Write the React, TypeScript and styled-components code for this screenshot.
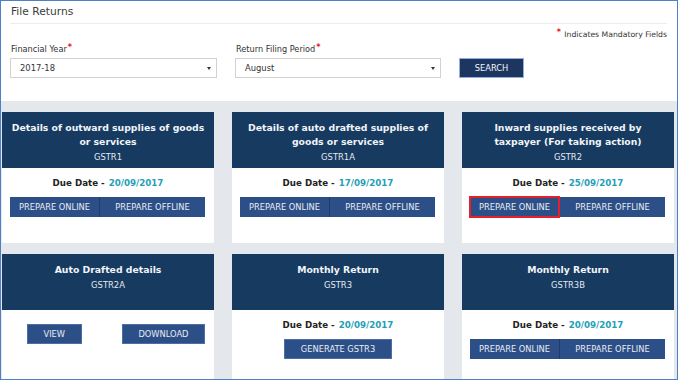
import React from "react";
import styled, { createGlobalStyle } from "styled-components";

const GlobalStyle = createGlobalStyle`
  html, body {
    margin: 0;
    padding: 0;
    background: #ffffff;
  }
  body {
    font-family: "DejaVu Sans", Verdana, sans-serif;
  }
`;

const Page = styled.div`
  width: 678px;
  height: 380px;
  box-sizing: border-box;
  border: 1px solid #4f7fc4;
  display: flex;
  flex-direction: column;
  overflow: hidden;
  background: #ffffff;
`;

const TopSection = styled.div`
  padding: 4px 10px 0 9px;
  height: 100px;
  box-sizing: border-box;
  flex-shrink: 0;
`;

const Title = styled.div`
  font-size: 10.7px;
  line-height: 14px;
  color: #3c3c3c;
  padding: 0 0 4px 1px;
  border-bottom: 1px solid #ececec;
`;

const Mandatory = styled.div`
  margin-top: 5px;
  height: 12px;
  text-align: right;
  font-size: 7.7px;
  line-height: 12px;
  color: #333;
`;

const Star = styled.span`
  color: #e8141b;
  font-weight: bold;
  font-size: 8px;
  line-height: 0;
  vertical-align: 2px;
  margin: 0 1px;
`;

const FormRow = styled.div`
  margin-top: 2px;
  display: flex;
  align-items: flex-end;
  gap: 18px;
`;

const Field = styled.div<{ $width: number }>`
  width: ${(p) => p.$width}px;
  display: flex;
  flex-direction: column;
`;

const Label = styled.div`
  font-size: 8.2px;
  height: 12px;
  line-height: 12px;
  color: #333;
  margin-bottom: 3px;
  padding-left: 1px;
`;

const Select = styled.div`
  height: 20px;
  box-sizing: border-box;
  border: 1px solid #d2d2d2;
  display: flex;
  align-items: center;
  justify-content: space-between;
  padding: 0 5px 0 9px;
  font-size: 8.4px;
  color: #333;
`;

const Caret = styled.span`
  width: 0;
  height: 0;
  border-left: 2px solid transparent;
  border-right: 2px solid transparent;
  border-top: 3px solid #333;
`;

const SearchButton = styled.button`
  width: 65px;
  height: 20px;
  box-sizing: border-box;
  border: 1px solid #8fb0e0;
  background: #1d3660;
  color: #f2f5fa;
  font-family: "DejaVu Sans", Verdana, sans-serif;
  font-size: 8.3px;
  padding: 0;
`;

const Board = styled.div`
  flex: 1;
  background: #e4e7eb;
  padding: 11px 2px 0 1px;
  display: grid;
  grid-template-columns: repeat(3, 212px);
  column-gap: 18px;
  row-gap: 11px;
  align-content: start;
`;

const Card = styled.div`
  background: #ffffff;
  display: flex;
  flex-direction: column;
`;

const CardHead = styled.div`
  height: 56px;
  box-sizing: border-box;
  padding: 9px 8px 0;
  background: #163a60;
  text-align: center;
`;

const CardTitle = styled.div`
  font-size: 9.3px;
  font-weight: bold;
  line-height: 14px;
  color: #f1f4f8;
`;

const CardCode = styled.div`
  font-size: 8.4px;
  line-height: 14px;
  margin-top: 1px;
  color: #e3e9f1;
`;

const CardBody = styled.div<{ $top: number }>`
  height: 75px;
  box-sizing: border-box;
  padding-top: ${(p) => p.$top}px;
  display: flex;
  flex-direction: column;
`;

const DueLine = styled.div`
  text-align: center;
  font-size: 8.7px;
  font-weight: bold;
  line-height: 14px;
  color: #222;
  margin-bottom: 7px;
`;

const DueDate = styled.span`
  color: #1fa0b6;
  margin-left: 4px;
`;

const ButtonGroup = styled.div`
  margin: 0 9px 0 8px;
  display: flex;
  height: 20px;
`;

const GroupButton = styled.button<{ $width?: number; $highlight?: boolean }>`
  ${(p) => (p.$width ? `width: ${p.$width}px;` : "flex: 1;")}
  height: 20px;
  border: none;
  padding: 0;
  background: #2d4f87;
  color: #e8edf5;
  font-family: "DejaVu Sans", Verdana, sans-serif;
  font-size: 8.3px;
  & + & {
    border-left: 1px solid #1f3b68;
  }
  ${(p) =>
    p.$highlight ? "outline: 2px solid #e3202b; outline-offset: -1px; position: relative;" : ""}
`;

const ActionRow = styled.div<{ $center?: boolean }>`
  display: flex;
  justify-content: ${(p) => (p.$center ? "center" : "space-between")};
  padding: ${(p) => (p.$center ? "0" : "0 9px 0 25px")};
`;

const ActionButton = styled.button`
  height: 20px;
  box-sizing: border-box;
  padding: 0 15.5px;
  border: 1px solid #4d6fa6;
  background: #2d4f87;
  color: #e8edf5;
  font-family: "DejaVu Sans", Verdana, sans-serif;
  font-size: 8.3px;
`;

type Ret = {
  title: string;
  code: string;
  due?: string;
  kind: "prepare" | "view" | "generate";
  highlight?: boolean;
};

const returns: Ret[] = [
  { title: "Details of outward supplies of goods or services", code: "GSTR1", due: "20/09/2017", kind: "prepare" },
  { title: "Details of auto drafted supplies of goods or services", code: "GSTR1A", due: "17/09/2017", kind: "prepare" },
  { title: "Inward supplies received by taxpayer (For taking action)", code: "GSTR2", due: "25/09/2017", kind: "prepare", highlight: true },
  { title: "Auto Drafted details", code: "GSTR2A", kind: "view" },
  { title: "Monthly Return", code: "GSTR3", due: "20/09/2017", kind: "generate" },
  { title: "Monthly Return", code: "GSTR3B", due: "20/09/2017", kind: "prepare" },
];

const ReturnCard = ({ item }: { item: Ret }) => (
  <Card>
    <CardHead>
      <CardTitle>{item.title}</CardTitle>
      <CardCode>{item.code}</CardCode>
    </CardHead>
    <CardBody $top={item.due ? 8 : 14}>
      {item.due && (
        <DueLine>
          Due Date -<DueDate>{item.due}</DueDate>
        </DueLine>
      )}
      {item.kind === "prepare" && (
        <ButtonGroup>
          <GroupButton $width={89} $highlight={item.highlight}>
            PREPARE ONLINE
          </GroupButton>
          <GroupButton>PREPARE OFFLINE</GroupButton>
        </ButtonGroup>
      )}
      {item.kind === "view" && (
        <ActionRow>
          <ActionButton>VIEW</ActionButton>
          <ActionButton>DOWNLOAD</ActionButton>
        </ActionRow>
      )}
      {item.kind === "generate" && (
        <ActionRow $center>
          <ActionButton>GENERATE GSTR3</ActionButton>
        </ActionRow>
      )}
    </CardBody>
  </Card>
);

export default function App() {
  return (
    <>
      <GlobalStyle />
      <Page>
        <TopSection>
          <Title>File Returns</Title>
          <Mandatory>
            <Star>*</Star> Indicates Mandatory Fields
          </Mandatory>
          <FormRow>
            <Field $width={207}>
              <Label>
                Financial Year<Star>*</Star>
              </Label>
              <Select>
                2017-18
                <Caret />
              </Select>
            </Field>
            <Field $width={206}>
              <Label>
                Return Filing Period<Star>*</Star>
              </Label>
              <Select>
                August
                <Caret />
              </Select>
            </Field>
            <SearchButton>SEARCH</SearchButton>
          </FormRow>
        </TopSection>
        <Board>
          {returns.map((r) => (
            <ReturnCard key={r.code} item={r} />
          ))}
        </Board>
      </Page>
    </>
  );
}
